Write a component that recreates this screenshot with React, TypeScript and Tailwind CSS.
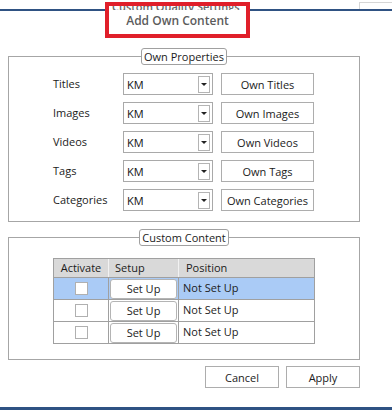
import React from 'react';

const font = { fontFamily: '"Open Sans", "Noto Sans", sans-serif' };

const properties = [
  { label: 'Titles', button: 'Own Titles' },
  { label: 'Images', button: 'Own Images' },
  { label: 'Videos', button: 'Own Videos' },
  { label: 'Tags', button: 'Own Tags' },
  { label: 'Categories', button: 'Own Categories' },
];

const rows = [0, 1, 2];

function Combo() {
  return (
    <div className="flex h-[22px] w-[90px] items-center border border-[#a9a9a9] bg-white pl-[3px] pr-[2px]">
      <span className="flex-1 text-[11px] leading-none text-[#111]">KM</span>
      <div className="flex h-[17px] w-[12px] items-center justify-center border border-[#b4b4b4] bg-white">
        <svg width="6" height="3" viewBox="0 0 6 3">
          <path d="M0 0h6L3 3z" fill="#222" />
        </svg>
      </div>
    </div>
  );
}

export default function App() {
  return (
    <div
      className="relative h-[414px] w-[392px] overflow-hidden bg-white text-[#1b1b1b]"
      style={font}
    >
      <div className="mt-[9px] h-[2px] bg-[#2f5283]" />

      {/* dialog fragment top right */}
      <div className="absolute left-[359px] top-[2px] h-[7px] w-[40px] border-l border-t border-[#d6d6d6]" />

      {/* highlight box */}
      <div className="absolute left-[105px] top-[2px] flex h-[36px] w-[145px] flex-col items-center overflow-hidden border-[4px] border-[#e01f2a] bg-white">
        <div className="h-[4px] w-full overflow-hidden">
          <div className="-mt-[5px] whitespace-nowrap pl-[3px] text-[11px] font-semibold leading-[11px] text-[#6a6a6a]">
            Custom Quality Settings
          </div>
        </div>
        <div className="mt-[4px] text-[12px] font-semibold leading-[14px] text-[#5c5c5c]">
          Add Own Content
        </div>
      </div>

      <fieldset className="ml-[8px] mt-[37px] w-[352px] border border-[#a6a6a6]">
        <legend className="mx-auto h-[17px] rounded-[3px] border border-[#a0a0a0] bg-white px-[2px] text-[11px] leading-[15px]">
          Own Properties
        </legend>
        <div className="flex flex-col gap-[7px] pb-[10px] pl-[44px] pt-[8px]">
          {properties.map((p) => (
            <div key={p.label} className="flex items-center">
              <span className="w-[70px] text-[11px]">{p.label}</span>
              <Combo />
              <button className="ml-[8px] h-[22px] w-[93px] border border-[#adadad] bg-white text-[11px] leading-none">
                {p.button}
              </button>
            </div>
          ))}
        </div>
      </fieldset>

      <fieldset className="ml-[8px] mt-[7px] w-[352px] border border-[#a6a6a6]">
        <legend className="mx-auto h-[17px] rounded-[3px] border border-[#a0a0a0] bg-white px-[2px] text-[11px] leading-[15px]">
          Custom Content
        </legend>
        <div className="pb-[15px] pl-[44px] pt-[12px]">
          <div className="w-[262px] border border-[#a0a0a0] text-[11px]">
            <div className="grid h-[18px] grid-cols-[55px_70px_1fr] bg-[#d9d9d9] leading-[18px]">
              <div className="border-r border-[#f2f2f2] text-center">Activate</div>
              <div className="border-r border-[#f2f2f2] pl-[6px]">Setup</div>
              <div className="pl-[7px]">Position</div>
            </div>
            {rows.map((r) => (
              <div
                key={r}
                className={`grid h-[22px] grid-cols-[55px_70px_1fr] border-t border-[#a0a0a0] ${
                  r === 0 ? 'bg-[#aacbf6]' : 'bg-white'
                }`}
              >
                <div className="flex items-center justify-center border-r border-[#a0a0a0]">
                  <div className="h-[13px] w-[13px] border border-[#b0b0b0] bg-white" />
                </div>
                <div className="flex items-center border-r border-[#a0a0a0] px-[1px]">
                  <button className="h-[20px] w-full rounded-[3px] border border-[#b4b4b4] bg-white text-[11px] leading-none">
                    Set Up
                  </button>
                </div>
                <div className="flex items-center pl-[4px]">Not Set Up</div>
              </div>
            ))}
          </div>
        </div>
      </fieldset>

      <div className="mt-[6px] flex w-[360px] justify-end gap-[7px]">
        <button className="h-[22px] w-[74px] border border-[#adadad] bg-white text-[11px] leading-none">
          Cancel
        </button>
        <button className="h-[22px] w-[74px] border border-[#adadad] bg-white text-[11px] leading-none">
          Apply
        </button>
      </div>

      <div className="mt-[19px] h-[3px] bg-[#2f5283]" />
    </div>
  );
}
